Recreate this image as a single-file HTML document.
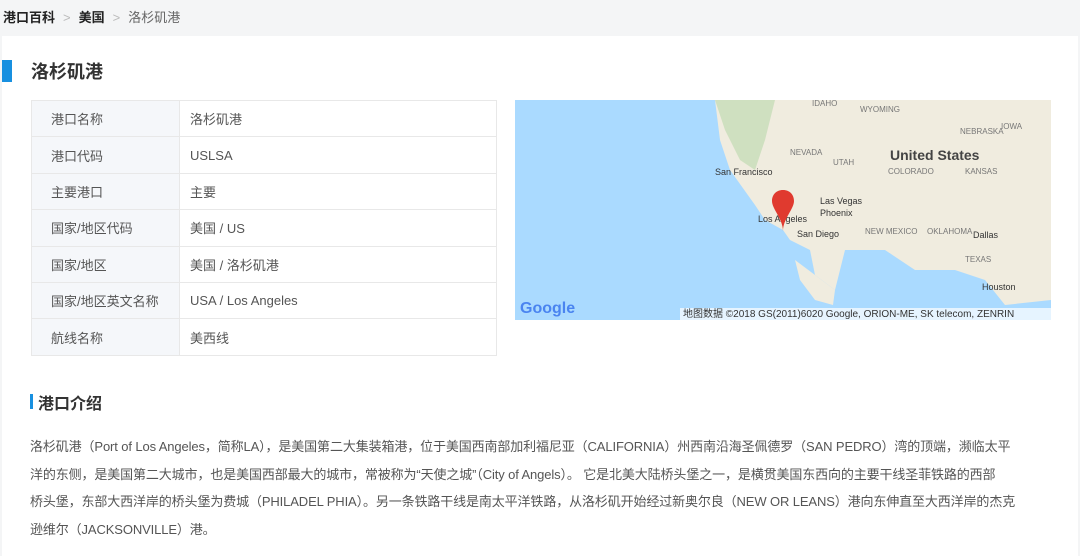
<!DOCTYPE html>
<html><head><meta charset="utf-8"><style>
body{margin:0;width:1080px;height:550px;overflow:hidden;background:#f4f5f6;font-family:"Liberation Sans","Noto Sans CJK SC",sans-serif;}
.bc{position:absolute;left:3px;top:7px;font-size:13px;color:#333}
.bc b{font-weight:bold;color:#222}.bc .s{color:#bbb;margin:0 8px}.bc .c{color:#666}
.card{position:absolute;left:2px;top:36px;width:1076px;height:520px;background:#fff}
.t1{position:absolute;left:0;top:24px;width:10px;height:22px;background:#1890e0}
.h1{position:absolute;left:29px;top:22px;font-size:18px;font-weight:bold;color:#333}
table{position:absolute;left:29px;top:64px;width:466px;border-collapse:collapse;font-size:13px;color:#555}
td{border:1px solid #e8e8e8;height:36.4px;box-sizing:border-box;padding:0;}
td.l{width:148px;background:#f5f7fa;padding-left:19px;box-sizing:border-box}
td.v{padding-left:10px}
.map{position:absolute;left:513px;top:64px;width:536px;height:220px;overflow:hidden;background:#aadaff}
.t2{position:absolute;left:28px;top:358px;width:3px;height:15px;background:#1890e0}
.h2{position:absolute;left:36px;top:354px;font-size:16px;font-weight:bold;color:#333}
.p{position:absolute;left:28px;top:397px;width:1040px;font-size:13px;color:#555;line-height:27.7px;letter-spacing:-0.12px;white-space:nowrap}
</style></head><body>
<div class="bc"><b>港口百科</b><span class="s">&gt;</span><b>美国</b><span class="s">&gt;</span><span class="c">洛杉矶港</span></div>
<div class="card">
<div class="t1"></div><div class="h1">洛杉矶港</div>
<table>
<tr><td class="l">港口名称</td><td class="v">洛杉矶港</td></tr>
<tr><td class="l">港口代码</td><td class="v">USLSA</td></tr>
<tr><td class="l">主要港口</td><td class="v">主要</td></tr>
<tr><td class="l">国家/地区代码</td><td class="v">美国 / US</td></tr>
<tr><td class="l">国家/地区</td><td class="v">美国 / 洛杉矶港</td></tr>
<tr><td class="l">国家/地区英文名称</td><td class="v">USA / Los Angeles</td></tr>
<tr><td class="l">航线名称</td><td class="v">美西线</td></tr>
</table>
<div class="map"><svg width="536" height="220" style="position:absolute;left:0;top:0">
<path d="M200,0 L536,0 L536,200 L490,205 L470,180 L440,170 L400,170 L370,150 L330,150 L320,190 L300,175 L295,150 L275,140 L268,130 L250,120 L240,105 L215,70 L205,40 Z" fill="#f0ecdf"/>
<path d="M200,0 L260,0 L250,40 L240,70 L225,60 L210,30 Z" fill="#cfe0c0"/>
<path d="M280,160 L300,175 L320,190 L318,205 L300,200 L285,180 Z" fill="#f0ecdf"/>
<g font-family="Liberation Sans" fill="#777" font-size="8">
<text x="275" y="55">NEVADA</text><text x="318" y="65">UTAH</text><text x="373" y="74">COLORADO</text><text x="450" y="74">KANSAS</text>
<text x="297" y="6">IDAHO</text><text x="345" y="12">WYOMING</text><text x="445" y="34">NEBRASKA</text><text x="350" y="134">NEW MEXICO</text><text x="450" y="162">TEXAS</text><text x="486" y="29">IOWA</text><text x="412" y="134">OKLAHOMA</text></g>
<g font-family="Liberation Sans" fill="#333" font-size="9">
<text x="200" y="75">San Francisco</text><text x="305" y="104">Las Vegas</text><text x="243" y="122">Los Angeles</text><text x="282" y="137">San Diego</text><text x="458" y="138">Dallas</text><text x="467" y="190">Houston</text><text x="305" y="116">Phoenix</text></g>
<text x="375" y="60" font-family="Liberation Sans" font-size="14" font-weight="bold" fill="#444">United States</text>
<path d="M268,90 c-7,0 -11,5 -11,11 c0,8 11,18 11,30 c0,-12 11,-22 11,-30 c0,-6 -4,-11 -11,-11z" fill="#e03a2f"/>
<text x="5" y="213" font-family="Liberation Sans" font-size="16" font-weight="bold" fill="#4a84f0">Google</text>
<rect x="165" y="208" width="371" height="12" fill="rgba(255,255,255,.7)"/>
<text x="168" y="217" font-family="Liberation Sans,Noto Sans CJK SC" font-size="10" fill="#333">地图数据 ©2018 GS(2011)6020 Google, ORION-ME, SK telecom, ZENRIN</text>
</svg></div>
<div class="t2"></div><div class="h2">港口介绍</div>
<div class="p">洛杉矶港（Port of Los Angeles，简称LA），是美国第二大集装箱港，位于美国西南部加利福尼亚（CALIFORNIA）州西南沿海圣佩德罗（SAN PEDRO）湾的顶端，濒临太平<br>洋的东侧，是美国第二大城市，也是美国西部最大的城市，常被称为“天使之城”（City of Angels）。 它是北美大陆桥头堡之一，是横贯美国东西向的主要干线圣菲铁路的西部<br>桥头堡，东部大西洋岸的桥头堡为费城（PHILADEL PHIA）。另一条铁路干线是南太平洋铁路，从洛杉矶开始经过新奥尔良（NEW OR LEANS）港向东伸直至大西洋岸的杰克<br>逊维尔（JACKSONVILLE）港。</div>
</div>
</body></html>
